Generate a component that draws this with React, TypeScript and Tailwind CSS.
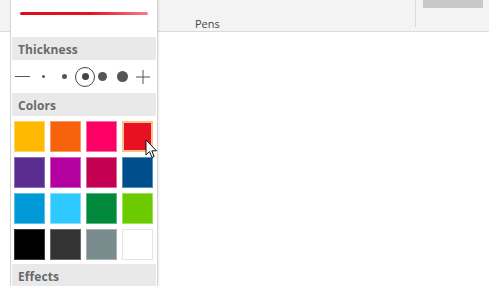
import React from "react"

const colors = [
  { c: "#ffb900", b: "#ffd466" },
  { c: "#f7630c", b: "#fa9a62" },
  { c: "#fd0065", b: "#ff6aa5" },
  { c: "#e81123", b: "#e81123", selected: true },
  { c: "#5c2d91", b: "#8d6bb6" },
  { c: "#b4009e", b: "#d060c3" },
  { c: "#c30052", b: "#db6a9a" },
  { c: "#004e8c", b: "#5a8db6" },
  { c: "#0099d8", b: "#5cc0ea" },
  { c: "#2ec9ff", b: "#84deff" },
  { c: "#00893a", b: "#5db685" },
  { c: "#6bcb00", b: "#a2df5c" },
  { c: "#000000", b: "#3a3a3a" },
  { c: "#333333", b: "#6a6a6a" },
  { c: "#7a8b8e", b: "#a6b2b4" },
  { c: "#ffffff", b: "#e4e4e4" },
]

const font = { fontFamily: '"Open Sans", "Noto Sans", sans-serif' }

const SectionHeader = ({ title }: { title: string }) => (
  <div className="mx-[1px] h-[23px] bg-[#e9e9e9] flex items-center pl-[6px] pt-[3px] text-[12px] font-bold text-[#6a6a6a] tracking-[0.1px]">
    {title}
  </div>
)

const Cursor = () => (
  <svg width="13" height="20" viewBox="0 0 13 20">
    <path
      d="M1 1 L1 16 L4.5 12.5 L7 18.5 L9.2 17.6 L6.8 11.8 L11.5 11.8 Z"
      fill="#fff"
      stroke="#111"
      strokeWidth="1"
      strokeLinejoin="round"
    />
  </svg>
)

const App = () => {
  return (
    <div className="relative w-[489px] h-[286px] overflow-hidden bg-white" style={font}>
      {/* ribbon */}
      <div className="h-[32px] bg-[#f3f3f3] border-b border-[#dcdcdc] flex">
        <div className="w-[416px] h-[27px] border-r border-[#dadada] flex items-end pl-[195px]">
          <span className="text-[11px] leading-none text-[#444] mb-[-2px]">Pens</span>
        </div>
        <div className="ml-[7px] w-[60px] h-[8px] bg-[#c8c8c8]" />
      </div>

      {/* pen dropdown */}
      <div className="absolute left-[10px] top-0 w-[148px] h-[286px] bg-white border-x border-[#d4d4d4] shadow-[1px_0_2px_rgba(0,0,0,0.08)]">
        <div className="h-[37px] pt-[12px] pl-[9px] pr-[10px]">
          <div className="h-[3px] w-[128px] rounded-full bg-[linear-gradient(to_right,#e10b1c,#e81123_55%,#ef8089)]" />
        </div>

        <SectionHeader title="Thickness" />
        <div className="h-[33px] flex items-center pl-[4px] text-[#555]">
          <span className="block w-[15px] h-[1px] bg-[#555]" />
          <span className="block ml-[12px] w-[3px] h-[3px] rounded-full bg-[#555]" />
          <span className="block ml-[17px] w-[5px] h-[5px] rounded-full bg-[#555]" />
          <span className="ml-[8px] w-[20px] h-[20px] rounded-full border-[1.5px] border-[#444] flex items-center justify-center">
            <span className="block w-[7px] h-[7px] rounded-full bg-[#444]" />
          </span>
          <span className="block ml-[3px] w-[9px] h-[9px] rounded-full bg-[#555]" />
          <span className="block ml-[10px] w-[11px] h-[11px] rounded-full bg-[#555]" />
          <svg className="ml-[8px]" width="14" height="14" viewBox="0 0 14 14">
            <path d="M7 0 V14 M0 7 H14" stroke="#555" strokeWidth="1" />
          </svg>
        </div>

        <SectionHeader title="Colors" />
        <div className="grid grid-cols-[repeat(4,31px)] gap-[5px] pl-[3px] pt-[5px] pb-[4px]">
          {colors.map((s) => (
            <div
              key={s.c}
              className={
                s.selected
                  ? "w-[31px] h-[31px] border-2 border-[#f9c28a]"
                  : "w-[31px] h-[31px] border"
              }
              style={{ backgroundColor: s.c, borderColor: s.selected ? undefined : s.b }}
            />
          ))}
        </div>

        <SectionHeader title="Effects" />
      </div>

      <div className="absolute left-[145px] top-[139px]">
        <Cursor />
      </div>
    </div>
  )
}

export default App
